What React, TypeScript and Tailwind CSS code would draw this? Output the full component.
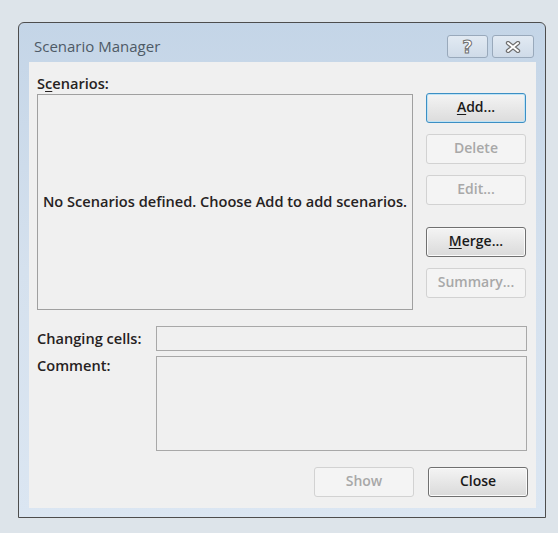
import React from "react";

const font = { fontFamily: '"Open Sans", "Noto Sans", "Liberation Sans", sans-serif' };

function Btn({ children, variant }: { children: React.ReactNode; variant: "focus" | "normal" | "disabled" }) {
  const base = "w-[100px] h-[30px] rounded-[3px] flex items-center justify-center text-[14px] leading-[18px] pb-[2px] font-semibold border";
  if (variant === "focus")
    return (
      <div className={`${base} border-[#3c8fc4] bg-gradient-to-b from-[#f4f4f4] to-[#dcdcdc] text-[#1a1a1a] shadow-[inset_0_0_0_1px_#bfe3f5]`}>
        {children}
      </div>
    );
  if (variant === "normal")
    return (
      <div className={`${base} border-[#707070] bg-gradient-to-b from-[#f4f4f4] to-[#dadada] text-[#1a1a1a] shadow-[inset_0_0_0_1px_#fbfbfb]`}>
        {children}
      </div>
    );
  return <div className={`${base} border-[#d2d2d2] bg-[#f4f4f4] text-[#a8a8a8]`}>{children}</div>;
}

export default function App() {
  return (
    <div className="w-[558px] h-[533px] bg-[#dde4ea] pl-[18px] pt-[22px]" style={font}>
      <div className="w-[528px] h-[496px] border border-[#4d4d4d] rounded-tl-[6px] rounded-tr-[6px] bg-gradient-to-b from-[#c4d5e7] via-[#d5e1ee] to-[#dbe6f2] flex flex-col">
        {/* title bar */}
        <div className="h-[39px] flex items-start">
          <div className="pl-[15px] pt-[14px] text-[15px] leading-[18px] text-[#4e5a66]">Scenario Manager</div>
          <div className="ml-auto mt-[12px] mr-[11px] flex gap-[4px]">
            <div className="w-[41px] h-[23px] rounded-[3px] border border-[#99a9bb] bg-gradient-to-b from-[#e2eaf3] to-[#cfdbe8] flex items-center justify-center">
              <span className="text-[18px] font-bold leading-none text-white [-webkit-text-stroke:1px_#6f6f6f]" style={{ fontFamily: '"DejaVu Sans", sans-serif' }}>?</span>
            </div>
            <div className="w-[42px] h-[23px] rounded-[3px] border border-[#99a9bb] bg-gradient-to-b from-[#e2eaf3] to-[#cfdbe8] flex items-center justify-center">
              <svg width="16" height="12" viewBox="0 0 16 12">
                <path d="M3 2 L13 10 M13 2 L3 10" stroke="#6f6f6f" strokeWidth="4.4" strokeLinecap="round" />
                <path d="M3 2 L13 10 M13 2 L3 10" stroke="#ffffff" strokeWidth="2" strokeLinecap="round" />
              </svg>
            </div>
          </div>
        </div>
        {/* client */}
        <div className="ml-[10px] mr-[9px] mb-[9px] flex-1 bg-[#f0f0f0] pl-[8px] pt-[12px] text-[14.6px] font-semibold text-[#262222]">
          <div className="flex">
            <div className="w-[376px] flex flex-col">
              <div className="h-[20px] leading-[18px]">
                S<span className="underline underline-offset-2">c</span>enarios:
              </div>
              <div className="h-[216px] border border-[#a0a0a0] bg-[#f0f0f0] flex items-center justify-center">
                <span>No Scenarios defined. Choose Add to add scenarios.</span>
              </div>
            </div>
            <div className="ml-[13px] mt-[19px] flex flex-col">
              <Btn variant="focus">
                <span><span className="underline underline-offset-2">A</span>dd...</span>
              </Btn>
              <div className="h-[11px]" />
              <Btn variant="disabled">Delete</Btn>
              <div className="h-[11px]" />
              <Btn variant="disabled">Edit...</Btn>
              <div className="h-[22px]" />
              <Btn variant="normal">
                <span><span className="underline underline-offset-2">M</span>erge...</span>
              </Btn>
              <div className="h-[11px]" />
              <Btn variant="disabled">Summary...</Btn>
            </div>
          </div>
          <div className="mt-[16px] flex items-center">
            <div className="w-[119px]">Changing cells:</div>
            <div className="w-[371px] h-[25px] border border-[#a8a8a8] bg-[#f0f0f0]" />
          </div>
          <div className="mt-[5px] flex items-start">
            <div className="w-[119px] leading-[18px]">Comment:</div>
            <div className="w-[371px] h-[95px] border border-[#a8a8a8] bg-[#f0f0f0]" />
          </div>
          <div className="mt-[16px] flex justify-end pr-[8px] gap-[14px]">
            <Btn variant="disabled">Show</Btn>
            <Btn variant="normal">Close</Btn>
          </div>
        </div>
      </div>
    </div>
  );
}
